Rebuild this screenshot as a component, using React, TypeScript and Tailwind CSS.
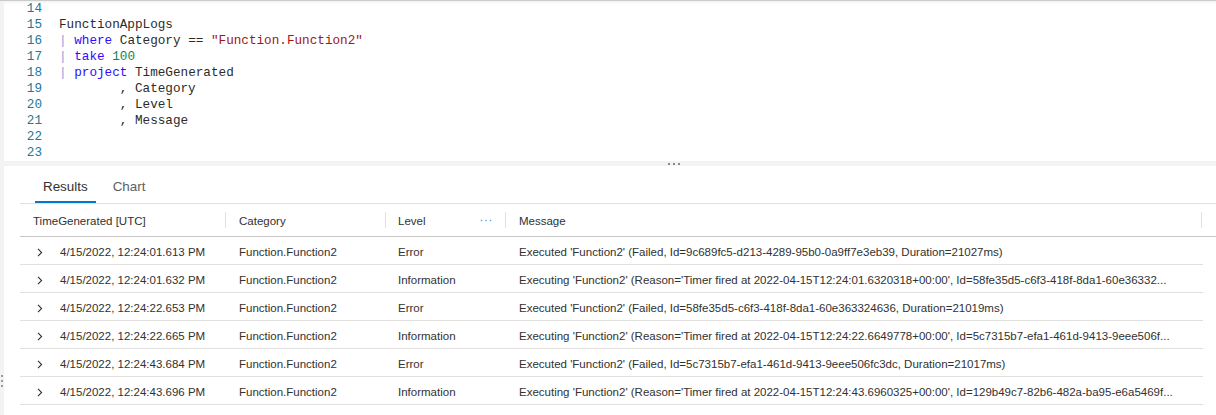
import React from "react";

const mono = { fontFamily: '"Liberation Mono", "DejaVu Sans Mono", monospace' };

type Tok = { t: string; c?: string };
const K = "text-[#2a0cff]";
const P = "text-[#7f9fe0]";
const S = "text-[#a31515]";
const N = "text-[#098658]";

const codeLines: { n: number; toks: Tok[] }[] = [
  { n: 14, toks: [] },
  { n: 15, toks: [{ t: "FunctionAppLogs" }] },
  {
    n: 16,
    toks: [
      { t: "|", c: P },
      { t: " " },
      { t: "where", c: K },
      { t: " Category == " },
      { t: '"Function.Function2"', c: S },
    ],
  },
  { n: 17, toks: [{ t: "|", c: P }, { t: " " }, { t: "take", c: K }, { t: " " }, { t: "100", c: N }] },
  { n: 18, toks: [{ t: "|", c: P }, { t: " " }, { t: "project", c: K }, { t: " TimeGenerated" }] },
  { n: 19, toks: [{ t: "        , Category" }] },
  { n: 20, toks: [{ t: "        , Level" }] },
  { n: 21, toks: [{ t: "        , Message" }] },
  { n: 22, toks: [] },
  { n: 23, toks: [] },
];

const rows = [
  ["4/15/2022, 12:24:01.613 PM", "Error", "Executed 'Function2' (Failed, Id=9c689fc5-d213-4289-95b0-0a9ff7e3eb39, Duration=21027ms)"],
  ["4/15/2022, 12:24:01.632 PM", "Information", "Executing 'Function2' (Reason='Timer fired at 2022-04-15T12:24:01.6320318+00:00', Id=58fe35d5-c6f3-418f-8da1-60e36332..."],
  ["4/15/2022, 12:24:22.653 PM", "Error", "Executed 'Function2' (Failed, Id=58fe35d5-c6f3-418f-8da1-60e363324636, Duration=21019ms)"],
  ["4/15/2022, 12:24:22.665 PM", "Information", "Executing 'Function2' (Reason='Timer fired at 2022-04-15T12:24:22.6649778+00:00', Id=5c7315b7-efa1-461d-9413-9eee506f..."],
  ["4/15/2022, 12:24:43.684 PM", "Error", "Executed 'Function2' (Failed, Id=5c7315b7-efa1-461d-9413-9eee506fc3dc, Duration=21017ms)"],
  ["4/15/2022, 12:24:43.696 PM", "Information", "Executing 'Function2' (Reason='Timer fired at 2022-04-15T12:24:43.6960325+00:00', Id=129b49c7-82b6-482a-ba95-e6a5469f..."],
];

function Divider() {
  return <span className="w-px h-[16px] bg-[#e1dfdd] shrink-0" />;
}

function Chevron() {
  return (
    <svg width="6" height="9" viewBox="0 0 6 9" className="shrink-0 mt-[3px]">
      <polyline points="1,0.8 4.6,4.5 1,8.2" fill="none" stroke="#323130" strokeWidth="1.1" />
    </svg>
  );
}

export default function App() {
  const ui = { fontFamily: '"Liberation Sans", Arial, sans-serif' };
  return (
    <div className="w-[1216px] h-[415px] overflow-hidden bg-white flex flex-col" style={ui}>
      <div className="h-px bg-[#cccccc] shrink-0" />
      <div className="flex flex-1 min-h-0">
        {/* left strip */}
        <div className="w-[4px] bg-[#f3f3f3] shrink-0 flex flex-col items-start pt-[374px] gap-[3px]">
          <span className="w-[2px] h-[2px] bg-[#9a9a9a] ml-px" />
          <span className="w-[2px] h-[2px] bg-[#9a9a9a] ml-px" />
          <span className="w-[2px] h-[2px] bg-[#9a9a9a] ml-px" />
        </div>
        <div className="flex-1 flex flex-col min-w-0">
          {/* editor */}
          <div className="h-[160px] shrink-0 shadow-[inset_0_3px_3px_-2px_rgba(0,0,0,0.08)]" style={mono}>
            {codeLines.map((l) => (
              <div key={l.n} className="flex h-[16px] items-center text-[12.66px] leading-[16px]">
                <span className="w-[38px] text-right text-[#237893] shrink-0">{l.n}</span>
                <span className="ml-[17px] whitespace-pre text-[#2b2b2b]">
                  {l.toks.map((tk, i) => (
                    <span key={i} className={tk.c}>
                      {tk.t}
                    </span>
                  ))}
                </span>
              </div>
            ))}
          </div>
          {/* splitter */}
          <div className="h-[5px] bg-[#f3f3f3] shrink-0 flex items-center gap-[3px] pl-[664px]">
            <span className="w-[2px] h-[2px] bg-[#8a8a8a]" />
            <span className="w-[2px] h-[2px] bg-[#8a8a8a]" />
            <span className="w-[2px] h-[2px] bg-[#8a8a8a]" />
          </div>
          {/* results */}
          <div className="flex-1 flex flex-col pl-[16px]">
            <div className="h-[38px] shrink-0 border-b border-[#e1dfdd] flex items-end pl-[15px] gap-[9px]">
              <div className="h-[37px] flex items-center px-[8px] border-b-2 border-[#0078d4] text-[13.4px] text-[#323130]">
                <span className="mt-[7px]">Results</span>
              </div>
              <div className="h-[37px] flex items-center px-[8px] border-b-2 border-transparent text-[13.4px] text-[#605e5c]">
                <span className="mt-[7px]">Chart</span>
              </div>
            </div>
            <div className="h-[33px] shrink-0 border-b border-[#c8c6c4] flex text-[11.5px] text-[#323130]">
              <div className="w-[206px] flex items-center justify-between pl-[13px]">
                <span className="mt-[3px]">TimeGenerated [UTC]</span>
                <Divider />
              </div>
              <div className="w-[160px] flex items-center justify-between pl-[13px]">
                <span className="mt-[3px]">Category</span>
                <Divider />
              </div>
              <div className="w-[120px] flex items-center pl-[12px]">
                <span className="flex-1 mt-[3px]">Level</span>
                <svg width="12" height="3" viewBox="0 0 12 3" className="mr-[13px] mt-[1px]">
                  <circle cx="1.5" cy="1.5" r="0.8" fill="#5a9ee0" />
                  <circle cx="6" cy="1.5" r="0.8" fill="#5a9ee0" />
                  <circle cx="10.5" cy="1.5" r="0.8" fill="#5a9ee0" />
                </svg>
                <Divider />
              </div>
              <div className="w-[696px] flex items-center justify-between pl-[13px]">
                <span className="mt-[3px]">Message</span>
                <Divider />
              </div>
            </div>
            <div className="w-[1183px] text-[11.5px] text-[#323130]">
              {rows.map((r, i) => (
                <div key={i} className="h-[28px] border-b border-[#e1dfdd] flex items-center">
                  <div className="w-[206px] flex items-center pl-[17px] gap-[17px]">
                    <Chevron />
                    <span className="mt-[4px]">{r[0]}</span>
                  </div>
                  <div className="w-[160px] pl-[13px] mt-[4px]">Function.Function2</div>
                  <div className="w-[120px] pl-[12px] mt-[4px]">{r[1]}</div>
                  <div className="w-[696px] pl-[13px] pr-[8px] mt-[4px] whitespace-nowrap overflow-hidden">{r[2]}</div>
                </div>
              ))}
            </div>
          </div>
        </div>
      </div>
    </div>
  );
}
